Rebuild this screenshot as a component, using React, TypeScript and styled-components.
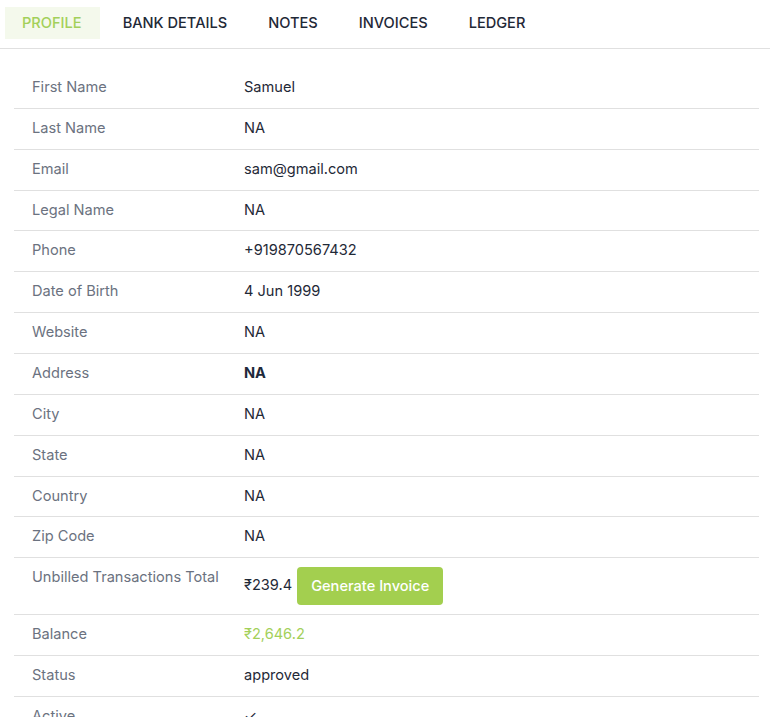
import React from 'react'
import styled, { createGlobalStyle } from 'styled-components'

const tabs = ['PROFILE', 'BANK DETAILS', 'NOTES', 'INVOICES', 'LEDGER']

const rows: { label: string; value: React.ReactNode; kind?: 'bold' | 'green' }[] = [
  { label: 'First Name', value: 'Samuel' },
  { label: 'Last Name', value: 'NA' },
  { label: 'Email', value: 'sam@gmail.com' },
  { label: 'Legal Name', value: 'NA' },
  { label: 'Phone', value: '+919870567432' },
  { label: 'Date of Birth', value: '4 Jun 1999' },
  { label: 'Website', value: 'NA' },
  { label: 'Address', value: 'NA', kind: 'bold' },
  { label: 'City', value: 'NA' },
  { label: 'State', value: 'NA' },
  { label: 'Country', value: 'NA' },
  { label: 'Zip Code', value: 'NA' },
]

const App = () => {
  return (
    <>
      <GlobalStyle />
      <TabBar>
        {tabs.map((t, i) => (
          <Tab key={t} $active={i === 0}>
            {t}
          </Tab>
        ))}
      </TabBar>

      <Table>
        <tbody>
          {rows.map((r) => (
            <tr key={r.label}>
              <Label>{r.label}</Label>
              <Value $kind={r.kind}>{r.value}</Value>
            </tr>
          ))}
          <tr>
            <Label>Unbilled Transactions Total</Label>
            <ActionCell>
              <ActionRow>
                <span>₹239.4</span>
                <GenerateButton>Generate Invoice</GenerateButton>
              </ActionRow>
            </ActionCell>
          </tr>
          <tr>
            <Label>Balance</Label>
            <Value $kind="green">₹2,646.2</Value>
          </tr>
          <tr>
            <Label>Status</Label>
            <Value>approved</Value>
          </tr>
          <tr>
            <Label>Active</Label>
            <Value>✓</Value>
          </tr>
        </tbody>
      </Table>
    </>
  )
}

const GlobalStyle = createGlobalStyle`
  body {
    margin: 0;
    background: #fff;
    font-family: Inter, 'Noto Sans', sans-serif;
    font-size: 14.6px;
    color: #1f2937;
  }
`

const TabBar = styled.div`
  display: flex;
  gap: 6px;
  padding: 7px 5px 9px;
  border-bottom: 1px solid #e0e0e0;
`

const Tab = styled.div<{ $active?: boolean }>`
  height: 32px;
  display: flex;
  align-items: center;
  padding: 0 18px 0 17px;
  font-size: 14.6px;
  font-weight: 500;
  color: ${(p) => (p.$active ? '#a3d05a' : '#1f2937')};
  background: ${(p) => (p.$active ? '#f4f9ec' : 'transparent')};
`

const Table = styled.table`
  margin: 19px 11px 0 14px;
  width: calc(100% - 25px);
  border-collapse: collapse;
  td {
    border-bottom: 1px solid #e0e0e0;
    line-height: 15.86px;
  }
`

const Label = styled.td`
  width: 194px;
  padding: 12px 18px;
  color: #6b7280;
  vertical-align: top;
`

const Value = styled.td<{ $kind?: 'bold' | 'green' }>`
  padding: 12px 0;
  color: ${(p) => (p.$kind === 'green' ? '#a3d05a' : p.$kind === 'bold' ? '#1e293b' : '#1f2937')};
  font-weight: ${(p) => (p.$kind === 'bold' ? 700 : 400)};
`

const ActionCell = styled.td`
  padding: 9px 0 9px;
`

const ActionRow = styled.div`
  display: flex;
  align-items: center;
  gap: 5px;
`

const GenerateButton = styled.button`
  height: 38px;
  padding: 0 14px;
  border: none;
  border-radius: 4px;
  background: #a3cf4f;
  color: #fff;
  font-family: Inter, 'Noto Sans', sans-serif;
  font-size: 14.6px;
  font-weight: 500;
`

export default App
